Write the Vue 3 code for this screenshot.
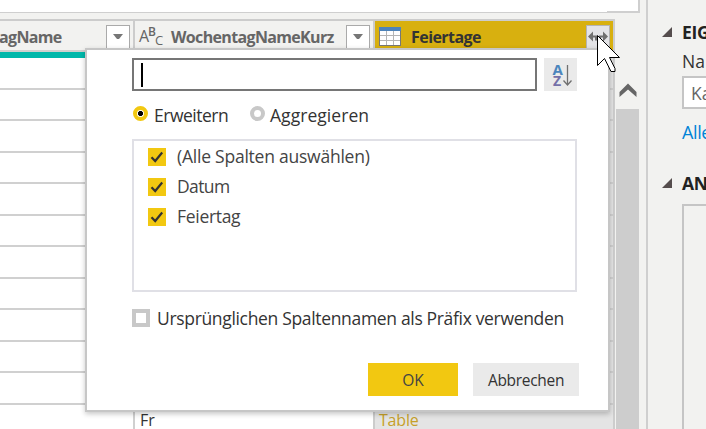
<script setup>
import { ref } from 'vue'

const search = ref('')
const mode = ref('Erweitern')
const modes = ['Erweitern', 'Aggregieren']
const options = ['(Alle Spalten auswählen)', 'Datum', 'Feiertag']
const rows = Array.from({ length: 12 }, (_, i) => i)
</script>

<template>
  <div class="app">
    <main class="editor">
      <div class="formula"><div class="formula-step"></div></div>
      <div class="workspace">
        <div class="grid">
          <div class="head">
            <div class="col c1">
              <span class="title t1">agName</span>
              <span class="drop"><svg width="10" height="6" viewBox="0 0 10 6"><path d="M0 0h10L6 5H4z" fill="#767676" /></svg></span>
            </div>
            <div class="col c2">
              <span class="abc"><i class="a">A</i><i class="b">B</i><i class="c">C</i></span>
              <span class="title t2">WochentagNameKurz</span>
              <span class="drop"><svg width="10" height="6" viewBox="0 0 10 6"><path d="M0 0h10L6 5H4z" fill="#767676" /></svg></span>
            </div>
            <div class="col c3">
              <svg class="table-icon" width="22" height="19" viewBox="0 0 22 19">
                <rect x=".5" y=".5" width="21" height="18" fill="#fff" stroke="#777" />
                <rect width="22" height="4" fill="#4e83b9" />
                <path d="M7.500 4v14M14.500 4v14M1 8.500h20M1 13.500h20" stroke="#b5b5b5" fill="none" />
              </svg>
              <span class="title t3">Feiertage</span>
              <span class="expand">
                <svg width="20" height="12" viewBox="0 0 20 12"><path d="M0 5.500L5 .5v10zM20 5.500L15 .5v10z" fill="#707070" /><path d="M4 5.500h4v4M16 5.500h-4v4" fill="none" stroke="#707070" stroke-width="2" /></svg>
              </span>
            </div>
          </div>
          <div class="teal"></div>
          <div class="rows">
            <div v-for="r in rows" :key="r" class="row">
              <div class="cell r1"></div>
              <div class="cell r2"><span v-if="r === 11">Fr</span></div>
              <div class="cell r3"><span v-if="r === 11">Table</span></div>
            </div>
          </div>
        </div>
        <div class="scroll">
          <div class="up"><svg width="18" height="15" viewBox="0 0 18 15"><path d="M.5 14V9L9 .5 17.500 9v5L9 6.500z" fill="#666" /></svg></div>
          <div class="thumb"></div>
        </div>
      </div>
    </main>

    <aside class="panel">
      <div class="section s1">
        <svg width="10" height="10" viewBox="0 0 10 10"><path d="M10 0v10H0z" fill="#554d4d" /></svg>
        <b>EIG</b>
      </div>
      <div class="name-label">Na</div>
      <div class="name-input">Ka</div>
      <div class="all-link">Alle</div>
      <div class="section s2">
        <svg width="10" height="10" viewBox="0 0 10 10"><path d="M10 0v10H0z" fill="#554d4d" /></svg>
        <b>AN</b>
      </div>
      <div class="steps"></div>
    </aside>

    <section class="dialog">
      <div class="search-line">
        <div class="search"><span class="caret"></span>{{ search }}</div>
        <div class="sort">
          <svg width="33" height="33" viewBox="0 0 33 33">
            <text x="8.500" y="17" class="sa">A</text>
            <text x="9" y="28" class="sz">Z</text>
            <path d="M23.500 7v20M19.500 22.500l4 4.500 4-4.500" fill="none" stroke="#707070" stroke-width="1.300" />
          </svg>
        </div>
      </div>
      <div class="modes">
        <div v-for="(m, i) in modes" :key="m" class="mode" :class="'mode' + i" @click="mode = m">
          <span class="radio" :class="{ on: mode === m }"></span><span class="mode-text">{{ m }}</span>
        </div>
      </div>
      <div class="list">
        <div v-for="(o, i) in options" :key="o" class="option">
          <span class="check"><svg width="18" height="18" viewBox="0 0 18 18"><path d="M3.500 9.300l3.700 3.700 7-8.500" fill="none" stroke="#333" stroke-width="2.200" /></svg></span>
          <span class="opt" :class="'opt' + i">{{ o }}</span>
        </div>
      </div>
      <div class="prefix"><span class="empty"></span><span class="prefix-text">Ursprünglichen Spaltennamen als Präfix verwenden</span></div>
      <div class="buttons">
        <div class="btn ok">OK</div>
        <div class="btn cancel"><span>Abbrechen</span></div>
      </div>
    </section>

    <svg class="cursor" width="24" height="38" viewBox="0 0 24 38">
      <path d="M.5.500V30.500L7.500 23.500 14 36.500h4v-3L12.500 22.500H22.500z" fill="#fff" stroke="#000" />
    </svg>
  </div>
</template>

<style>
body { margin: 0; overflow: hidden; }
</style>

<style scoped>
* { box-sizing: border-box; }
.app { position: relative; display: flex; width: 706px; height: 429px; overflow: hidden; background: #f2f2f0; color: #333; font-family: "Open Sans", "Noto Sans", sans-serif; font-size: 17px; white-space: nowrap; }
.editor { width: 646px; height: 429px; flex: none; }
.formula { display: flex; justify-content: flex-end; align-items: flex-end; width: 640px; height: 13px; background: #fff; border-right: 2px solid #cfcfcf; border-bottom: 1px solid #cfcfcf; }
.formula-step { width: 31px; height: 1px; background: #cfcfcf; }
.workspace { display: flex; margin-top: 6px; height: 410px; }
.grid { width: 615px; height: 410px; border-top: 2px solid #ccc; border-right: 2px solid #cdcdcd; overflow: hidden; flex: none; }
.head { display: flex; height: 31px; border-bottom: 2px solid #d0d0ce; }
.col { display: flex; align-items: center; height: 29px; }
.c1 { width: 135px; border-right: 2px solid #ccc; }
.c2 { width: 240px; border-right: 2px solid #ccc; }
.c3 { width: 238px; background: #d8b00f; }
.title { font-weight: 700; font-size: 16px; line-height: 24px; height: 24px; color: #666; margin-top: 2px; letter-spacing: -.65px; flex: none; }
.t1 { width: 107px; margin-left: -1px; }
.t2 { width: 175px; margin-left: 8px; }
.t3 { width: 175px; margin-left: 10px; color: #333; letter-spacing: -.55px; }
.drop { display: flex; align-items: center; justify-content: center; width: 24px; height: 24px; background: #fff; border: 1px solid #aaa; margin-top: 3px; flex: none; }
.abc { display: flex; width: 24px; height: 20px; margin: 2px 0 0 4px; color: #666; line-height: 16px; flex: none; }
.abc i { font-style: normal; flex: none; }
.a { font-size: 16px; width: 9px; margin-top: 1px; }
.b { font-size: 12px; width: 7px; margin-top: -3px; font-weight: 600; }
.c { font-size: 13px; margin-top: 5px; }
.table-icon { margin-left: 4px; margin-top: 1px; flex: none; }
.expand { display: flex; align-items: center; justify-content: center; width: 24px; height: 24px; background: #e3e3e6; border: 1px solid #b4b4b4; margin-top: 3px; flex: none; }
.teal { height: 6px; background: #01b8aa; }
.row { display: flex; height: 31.500px; }
.cell { height: 100%; border-bottom: 2px solid #d0d0d0; background: #fff; padding-left: 5px; font-size: 16px; line-height: 30px; }
.r1 { width: 135px; border-right: 2px solid #d0d0d0; }
.r2 { width: 240px; border-right: 2px solid #ccc; }
.r3 { width: 238px; background: #e4e4e4; color: #c6a02a; padding-left: 4px; letter-spacing: -.2px; }
.scroll { width: 23px; margin: 39px 0 0 1px; }
.up { display: flex; justify-content: center; align-items: center; height: 51px; padding-top: 14px; }
.thumb { height: 320px; background: #cdcdcd; }
.panel { width: 60px; height: 429px; border-left: 2px solid #cfcfcf; padding-left: 14px; overflow: hidden; flex: none; }
.section { display: flex; align-items: center; gap: 10px; height: 24px; font-size: 17.500px; color: #222; }
.section svg { flex: none; }
.section b { letter-spacing: -.3px; }
.s1 { margin-top: 20px; }
.s2 { margin-top: 26px; }
.name-label { margin: 6px 0 0 20px; height: 24px; line-height: 23px; font-size: 17.500px; }
.name-input { margin: 2px 0 0 20px; width: 100px; height: 33px; background: #fff; border: 2px solid #c5c5c5; padding-left: 7px; line-height: 30px; color: #666; font-size: 17.500px; }
.all-link { margin: 12px 0 0 20px; height: 24px; line-height: 22px; color: #0083d7; font-size: 18px; letter-spacing: -.4px; }
.steps { margin: 9px 0 0 20px; width: 100px; height: 240px; border: 2px solid #c5c5c5; }
.dialog { position: absolute; left: 85px; top: 48px; width: 525px; height: 364px; background: #fff; border: 2px solid #c6c6c6; padding: 8px 0 0 45px; box-shadow: 0 2px 5px rgba(0, 0, 0, .22); }
.search-line { display: flex; gap: 7px; }
.search { display: flex; align-items: center; width: 405px; height: 33px; border: 2px solid #767676; padding-left: 7px; }
.caret { width: 2px; height: 24px; background: #000; }
.sort { width: 33px; height: 33px; background: #eaeaea; }
.sort svg { display: block; }
.sa { font: 700 15px "Open Sans", sans-serif; fill: #4b86bd; }
.sz { font: 700 14px "Open Sans", sans-serif; fill: #7470a8; }
.modes { display: flex; height: 24px; margin-top: 12px; }
.mode { display: flex; width: 117px; height: 24px; }
.radio { width: 15px; height: 15px; margin: 3px 6px 0 1px; border: 4px solid #c8c8c8; border-radius: 50%; background: #fff; flex: none; }
.radio.on { border-color: #f2c811; background: radial-gradient(circle, #000 2.200px, #fff 2.900px); }
.mode-text { font-size: 17.500px; line-height: 24px; }
.mode0 .mode-text { letter-spacing: -.5px; }
.mode1 .mode-text { letter-spacing: .05px; }
.mode1 .radio { margin-right: 5px; }
.list { width: 445px; height: 153px; margin-top: 12px; border: 2px solid #e0e0e6; padding: 1px 0 0 14px; }
.option { display: flex; align-items: center; gap: 11px; height: 30px; color: #444; font-size: 17.500px; letter-spacing: -.3px; }
.opt { margin-top: -2px; }
.opt0 { letter-spacing: -.23px; }
.opt1 { letter-spacing: -.6px; }
.check { width: 18px; height: 18px; background: #f2c811; }
.check svg { display: block; }
.prefix { display: flex; align-items: center; gap: 7px; height: 30px; margin-top: 11px; font-size: 17.500px; letter-spacing: -.33px; }
.empty { width: 18px; height: 18px; border: 4px solid #c8c8c8; }
.buttons { display: flex; gap: 15px; margin: 30px 0 0 236px; }
.btn { display: flex; align-items: center; justify-content: center; height: 33px; font-size: 15.500px; padding-top: 1px; }
.ok { width: 90px; background: #f2c811; color: #444; }
.cancel { width: 106px; background: #eaeaea; letter-spacing: -.3px; }
.cursor { position: absolute; left: 597px; top: 35px; }
</style>
